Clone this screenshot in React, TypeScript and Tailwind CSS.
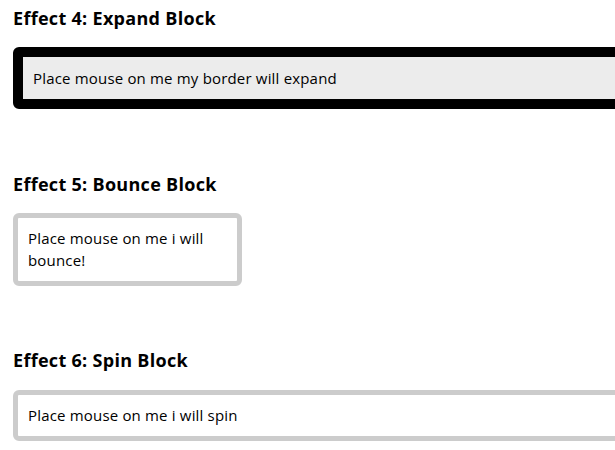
import React from 'react'

const font = { fontFamily: '"Open Sans", "DejaVu Sans", sans-serif' }

export default function App() {
  return (
    <div className="min-h-[450px] w-[615px] overflow-hidden bg-white pl-[13px] pt-[7px] text-black" style={font}>
      {/* expand */}
      <h3 className="text-[18px] font-bold leading-[22px] tracking-[0.3px]">Effect 4: Expand Block</h3>
      <div className="mt-[18px] w-[700px] rounded-[6px] border-[10px] border-black bg-[#ececec] px-[10px] py-[10px] text-[15px] leading-[22px] tracking-[0.18px]">
        Place mouse on me my border will expand
      </div>

      {/* bounce */}
      <h3 className="mt-[64px] text-[18px] font-bold leading-[22px] tracking-[0.3px]">Effect 5: Bounce Block</h3>
      <div className="mt-[18px] w-[229px] rounded-[6px] border-[5px] border-[#cccccc] bg-white px-[10px] py-[10px] text-[15px] leading-[21.5px] tracking-[0.18px]">
        Place mouse on me i will bounce!
      </div>

      {/* spin */}
      <h3 className="mt-[63px] text-[18px] font-bold leading-[22px] tracking-[0.3px]">Effect 6: Spin Block</h3>
      <div className="mt-[19px] w-[700px] rounded-[6px] border-[5px] border-[#cccccc] bg-white px-[10px] py-[10px] text-[15px] leading-[21px] tracking-[0.18px]">
        Place mouse on me i will spin
      </div>
    </div>
  )
}
